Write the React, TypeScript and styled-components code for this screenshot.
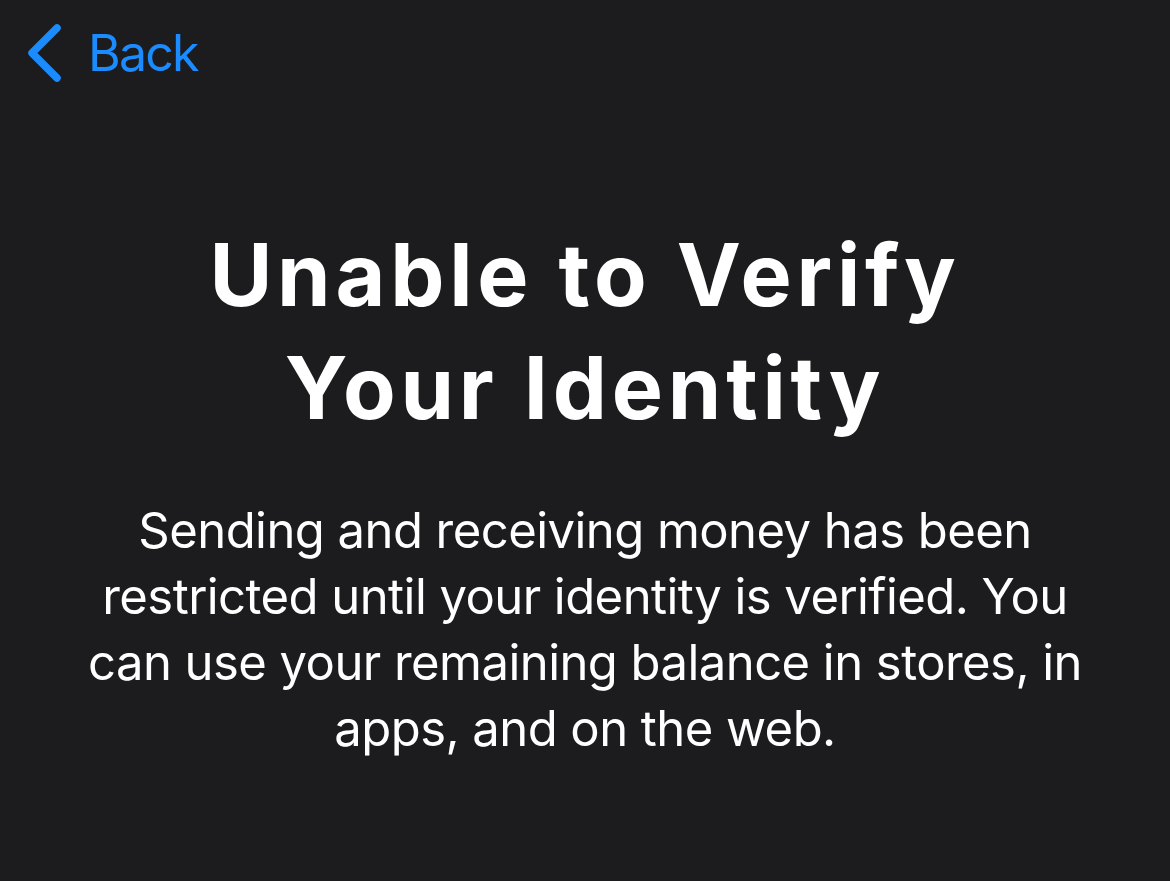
import React from "react";
import styled, { createGlobalStyle } from "styled-components";

const GlobalStyle = createGlobalStyle`
  html, body {
    margin: 0;
    padding: 0;
    background: #1c1c1e;
  }
  body {
    font-family: Inter, "Noto Sans", "Liberation Sans", sans-serif;
    -webkit-font-smoothing: antialiased;
  }
`;

const Screen = styled.div`
  width: 1170px;
  height: 881px;
  background: #1c1c1e;
  display: flex;
  flex-direction: column;
  overflow: hidden;
`;

const NavBar = styled.div`
  display: flex;
  align-items: center;
  height: 106px;
  padding-left: 26px;
`;

const BackButton = styled.button`
  display: flex;
  align-items: center;
  gap: 24px;
  background: none;
  border: 0;
  padding: 0;
  color: #1a8cff;
  font-family: inherit;
  font-size: 50px;
  font-weight: 400;
  letter-spacing: -1.8px;
  cursor: pointer;

  svg {
    width: 38px;
    height: 58px;
  }
`;

const Content = styled.div`
  display: flex;
  flex-direction: column;
  align-items: center;
  padding-top: 113px;
`;

const Title = styled.h1`
  margin: 0;
  color: #fff;
  font-size: 86px;
  font-weight: 700;
  line-height: 113px;
  letter-spacing: 4.8px;
  text-align: center;
`;

const Body = styled.p`
  margin: 53px 0 0;
  color: #fff;
  font-size: 49px;
  font-weight: 400;
  line-height: 66px;
  letter-spacing: -0.55px;
  text-align: center;
`;

const Chevron = () => (
  <svg viewBox="0 0 38 58" fill="none">
    <path
      d="M31 4 L6 29 L31 54"
      stroke="currentColor"
      strokeWidth="7.5"
      strokeLinecap="round"
      strokeLinejoin="round"
    />
  </svg>
);

export default function App() {
  return (
    <>
      <GlobalStyle />
      <Screen>
        <NavBar>
          <BackButton>
            <Chevron />
            Back
          </BackButton>
        </NavBar>
        <Content>
          <Title>
            Unable to Verify
            <br />
            Your Identity
          </Title>
          <Body>
            Sending and receiving money has been
            <br />
            restricted until your identity is verified. You
            <br />
            can use your remaining balance in stores, in
            <br />
            apps, and on the web.
          </Body>
        </Content>
      </Screen>
    </>
  );
}
